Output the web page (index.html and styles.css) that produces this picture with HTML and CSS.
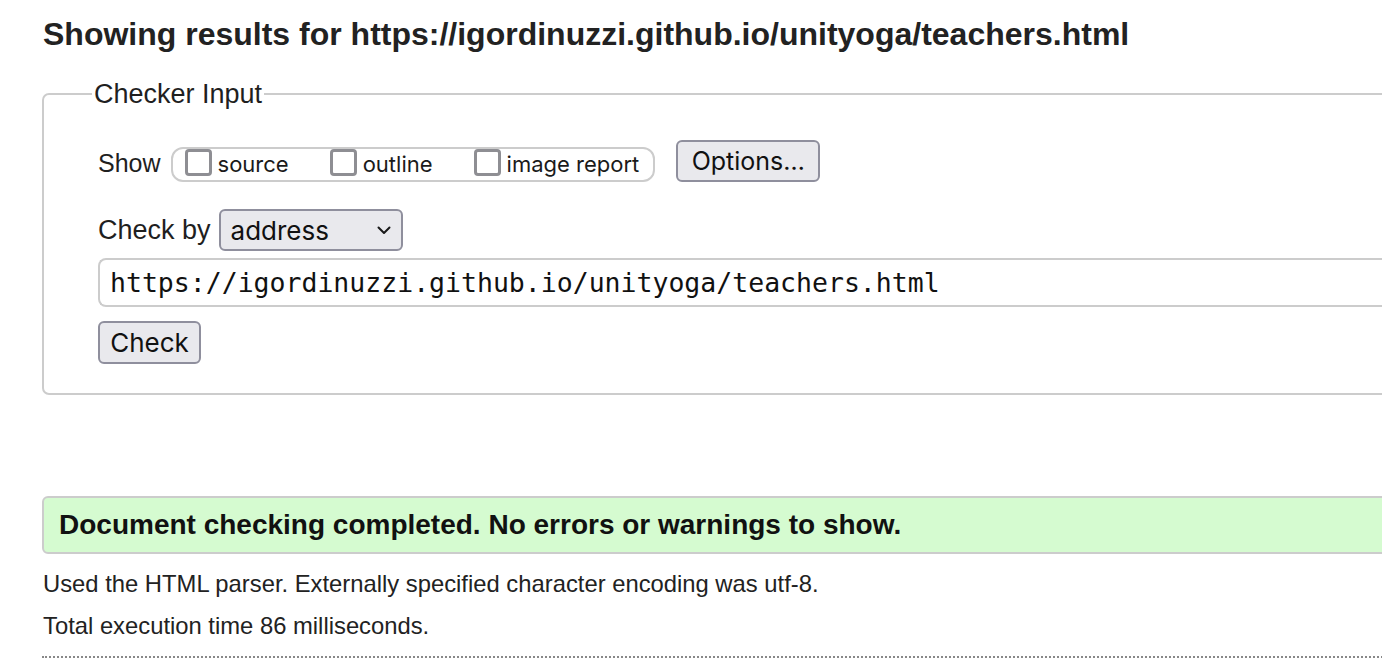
FILE: index.html
```html
<!DOCTYPE html>
<html lang="en">
<head>
<meta charset="utf-8">
<title>Showing results for https://igordinuzzi.github.io/unityoga/teachers.html - Nu Html Checker</title>
<link rel="stylesheet" href="styles.css">
</head>
<body>
<div class="page">
  <h2 class="title">Showing results for https://igordinuzzi.github.io/unityoga/teachers.html</h2>

  <fieldset class="checker">
    <legend class="legend">Checker Input</legend>

    <div class="row row-show">
      <span class="label label-show">Show</span>
      <div class="pill">
        <label class="opt"><input type="checkbox" class="cb"><span class="opt-text">source</span></label>
        <label class="opt"><input type="checkbox" class="cb"><span class="opt-text">outline</span></label>
        <label class="opt"><input type="checkbox" class="cb"><span class="opt-text">image report</span></label>
      </div>
      <button class="btn btn-options" type="button">Options…</button>
    </div>

    <div class="row row-by">
      <span class="label label-by">Check by</span>
      <div class="select">
        <span>address</span>
        <svg class="chev" width="14" height="9" viewBox="0 0 14 9"><path d="M1.5 1.5 L7 7 L12.5 1.5" fill="none" stroke="#1a1a1a" stroke-width="2" stroke-linecap="round" stroke-linejoin="round"/></svg>
      </div>
    </div>

    <div class="urlbox">https://igordinuzzi.github.io/unityoga/teachers.html</div>

    <div class="row row-check">
      <button class="btn btn-check" type="button">Check</button>
    </div>
  </fieldset>

  <div class="success">Document checking completed. No errors or warnings to show.</div>

  <p class="info info-first">Used the HTML parser. Externally specified character encoding was utf-8.</p>
  <p class="info">Total execution time 86 milliseconds.</p>

  <div class="rule"></div>
</div>
</body>
</html>
```

FILE: styles.css
```css
html, body {
  margin: 0;
  padding: 0;
  background: #fff;
  overflow: hidden;
}

body {
  font-family: "Liberation Sans", Arial, sans-serif;
  color: #1f1f1f;
}

.page {
  width: 1500px;
  padding: 14px 0 0 42px;
}

.title {
  margin: 0 0 0 1px;
  font-size: 32px;
  line-height: 40px;
  font-weight: bold;
  color: #222;
}

.checker {
  margin: 25px 0 0 0;
  padding: 0 0 29px 54px;
  border: 2px solid #cccccc;
  border-radius: 7px;
  min-width: 0;
}

.legend {
  margin-left: -6px;
  padding: 0 2px;
  font-size: 27px;
  line-height: 30px;
  color: #1f1f1f;
}

.row {
  display: flex;
  align-items: center;
}

.label {
  font-size: 26px;
  line-height: 30px;
  color: #1f1f1f;
}

.label-by {
  font-size: 27px;
}

.row-show {
  margin-top: 31px;
  height: 42px;
  align-items: flex-end;
}

.label-show {
  font-size: 25px;
  margin-bottom: 4px;
}

.pill {
  display: flex;
  align-items: flex-start;
  margin-left: 10px;
  height: 35px;
  box-sizing: border-box;
  padding: 0 14px 0 12px;
  border: 2px solid #cccccc;
  border-radius: 12px;
  gap: 41px;
}

.opt {
  display: flex;
  align-items: flex-start;
  gap: 6px;
  font-family: Inter, "Liberation Sans", sans-serif;
  font-size: 22px;
  color: #1a1a1a;
}

.opt-text {
  line-height: 26px;
  padding-top: 2px;
}

.cb {
  appearance: none;
  -webkit-appearance: none;
  margin: 0;
  width: 27px;
  height: 27px;
  box-sizing: border-box;
  border: 3px solid #8e8e93;
  border-radius: 4px;
  background: #fff;
}

.btn {
  font-family: Inter, "Liberation Sans", sans-serif;
  color: #111;
  background: #e9e9ed;
  border: 2px solid #8f8f9d;
  border-radius: 6px;
  box-sizing: border-box;
  padding: 0;
}

.btn-options {
  margin-left: 21px;
  width: 144px;
  height: 42px;
  font-size: 25px;
}

.row-by {
  margin-top: 27px;
  height: 42px;
}

.select {
  margin-left: 8px;
  width: 184px;
  height: 42px;
  box-sizing: border-box;
  display: flex;
  align-items: center;
  justify-content: space-between;
  padding: 0 10px 0 10px;
  background: #e9e9ed;
  border: 2px solid #8f8f9d;
  border-radius: 6px;
  font-family: Inter, "Liberation Sans", sans-serif;
  font-size: 26px;
  color: #111;
}

.chev {
  display: block;
}

.urlbox {
  margin-top: 7px;
  height: 49px;
  box-sizing: border-box;
  border: 2px solid #cccccc;
  border-right: none;
  border-radius: 8px 0 0 8px;
  padding: 0 0 0 10px;
  display: flex;
  align-items: center;
  font-family: "DejaVu Sans Mono", "Liberation Mono", monospace;
  font-size: 26.5px;
  color: #111;
}

.row-check {
  margin-top: 14px;
}

.btn-check {
  width: 103px;
  height: 43px;
  font-size: 26px;
}

.success {
  margin-top: 101px;
  height: 58px;
  box-sizing: border-box;
  display: flex;
  align-items: center;
  padding-left: 15px;
  background: #d5fbd0;
  border: 2px solid #cccccc;
  border-radius: 6px;
  font-size: 28px;
  font-weight: bold;
  color: #111;
}

.info {
  margin: 0 0 0 1px;
  font-size: 23.8px;
  line-height: 42px;
  color: #222;
}

.info-first {
  margin-top: 9px;
}

.rule {
  margin-top: 9px;
  border-top: 2px dotted #888;
}
```
